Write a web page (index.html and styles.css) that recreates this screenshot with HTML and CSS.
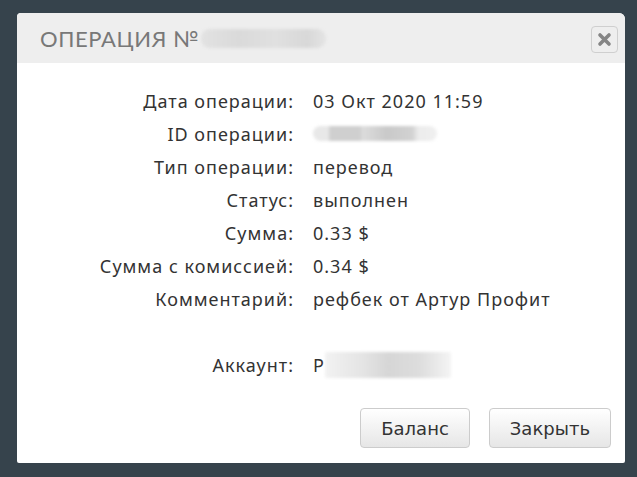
FILE: index.html
```html
<!DOCTYPE html>
<html lang="ru">
<head>
<meta charset="utf-8">
<title>Операция</title>
<link rel="stylesheet" href="styles.css">
</head>
<body>
<div class="dialog">
  <div class="dialog-header">
    <h2 class="dialog-title">ОПЕРАЦИЯ №<span class="blur blur-title"></span></h2>
    <button class="close-btn" aria-label="Закрыть">
      <svg width="15" height="15" viewBox="0 0 15 15"><path d="M3 3 L12 12 M12 3 L3 12" stroke="#858585" stroke-width="3.6" stroke-linecap="round"/></svg>
    </button>
  </div>
  <div class="dialog-body">
    <div class="details">
      <div class="label">Дата операции:</div><div class="value">03 Окт 2020 11:59</div>
      <div class="label">ID операции:</div><div class="value"><span class="blur blur-id"></span></div>
      <div class="label">Тип операции:</div><div class="value">перевод</div>
      <div class="label">Статус:</div><div class="value">выполнен</div>
      <div class="label">Сумма:</div><div class="value">0.33 $</div>
      <div class="label">Сумма с комиссией:</div><div class="value">0.34 $</div>
      <div class="label">Комментарий:</div><div class="value">рефбек от Артур Профит</div>
      <div class="spacer"></div>
      <div class="label">Аккаунт:</div><div class="value">Р<span class="blur blur-acc"></span></div>
    </div>
  </div>
  <div class="dialog-footer">
    <button class="btn">Баланс</button>
    <button class="btn">Закрыть</button>
  </div>
</div>
</body>
</html>
```
FILE: styles.css
```css
html, body {
  margin: 0;
  padding: 0;
  background: #36434c;
  width: 637px;
  height: 477px;
  overflow: hidden;
}
.dialog {
  margin: 13px 0 0 17px;
  width: 608px;
  height: 450px;
  background: #ffffff;
  border-radius: 4px 6px 2px 2px;
  display: flex;
  flex-direction: column;
  box-sizing: border-box;
}
.dialog-header {
  height: 50px;
  background: #eeeeee;
  border-radius: 4px 6px 0 0;
  display: flex;
  align-items: center;
  justify-content: space-between;
  padding: 0 7px 0 23px;
}
.dialog-title {
  margin: 0;
  font-family: "Lato", "DejaVu Sans", sans-serif;
  font-weight: 400;
  font-size: 22px;
  letter-spacing: 0.6px;
  color: #787878;
  display: flex;
  align-items: center;
}
.blur {
  display: inline-block;
  border-radius: 9px;
  filter: blur(1.5px);
}
.blur-title {
  width: 125px;
  height: 19px;
  margin-left: 2px;
  background: linear-gradient(90deg, #e2e2e2 0%, #dadada 30%, #e0e0e0 60%, #d8d8d8 85%, #e4e4e4 100%);
}
.close-btn {
  width: 27px;
  height: 27px;
  margin-top: 3px;
  padding: 0;
  border: 1px solid #cfcfcf;
  border-radius: 4px;
  background: #eeeeee;
  display: flex;
  align-items: center;
  justify-content: center;
}
.dialog-body {
  padding-top: 21px;
  flex: 1;
}
.details {
  display: grid;
  grid-template-columns: 277px auto;
  column-gap: 19px;
  grid-auto-rows: 33px;
  align-items: center;
  font-family: "Noto Sans", "DejaVu Sans", sans-serif;
  font-size: 18px;
  letter-spacing: 1px;
  color: #333333;
}
.label {
  text-align: right;
}
.value {
  display: flex;
  align-items: center;
}
.spacer {
  grid-column: 1 / 3;
}
.blur-id {
  width: 124px;
  height: 15px;
  border-radius: 8px;
  background: linear-gradient(90deg, #e8e8e8 0%, #e8e8e8 12%, #cfcfcf 14%, #cfcfcf 38%, #dcdcdc 40%, #c9c9c9 60%, #d2d2d2 80%, #ececec 85%, #f0f0f0 100%);
}
.blur-acc {
  width: 126px;
  height: 26px;
  border-radius: 2px;
  background: linear-gradient(90deg, #f2f2f2 0%, #e4e4e4 30%, #d6d6d6 50%, #dddddd 75%, #f4f4f4 100%);
}
.dialog-footer {
  display: flex;
  justify-content: flex-end;
  gap: 19px;
  padding: 0 14px 15px 0;
}
.btn {
  height: 40px;
  padding: 0 20px;
  border: 1px solid #cccccc;
  border-radius: 4px;
  background: linear-gradient(#ffffff, #e6e6e6);
  font-family: "DejaVu Sans", sans-serif;
  font-size: 18px;
  color: #333333;
}
```
